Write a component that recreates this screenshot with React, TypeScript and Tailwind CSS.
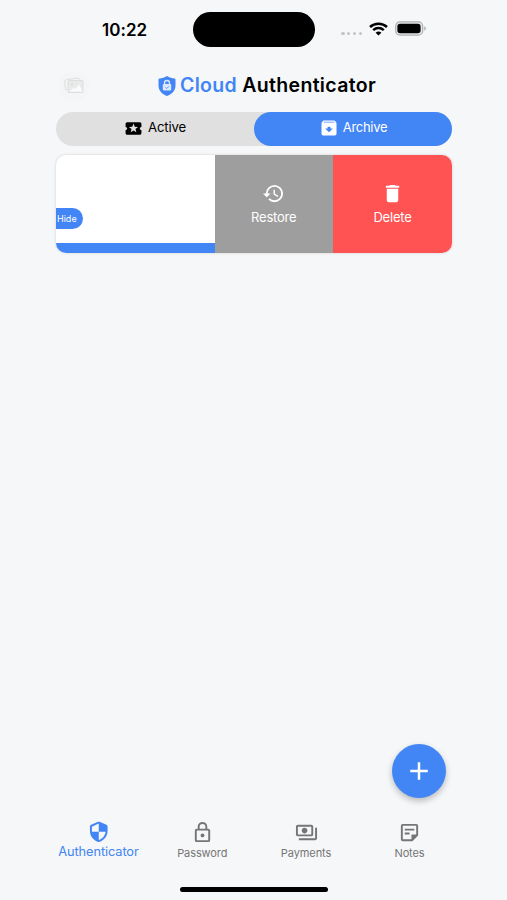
import React from "react";
import {
  MdLocalActivity,
  MdHistory,
  MdDelete,
  MdAdd,
  MdOutlinePayments,
} from "react-icons/md";

function StatusBar() {
  return (
    <div className="flex h-[60px] items-center">
      <div className="ml-[102px] w-[91px] pb-[1px] font-['Inter',sans-serif] text-[17px] font-semibold leading-5 tracking-[0.05px]">
        10:22
      </div>
      <div className="mb-[1px] h-[35px] w-[122px] rounded-full bg-black" />
      <div className="ml-[26px] mt-[7px] flex gap-[2.3px]">
        {[0, 1, 2, 3].map((i) => (
          <span key={i} className="size-[3.6px] rounded-full bg-[#c4c4c6]" />
        ))}
      </div>
      <svg className="mb-[3px] ml-[7px] h-[14px] w-[19px]" viewBox="0 0 19 14" fill="none" stroke="#000" strokeWidth="2.5">
        <path d="M1 5C5.7.6 13.3.6 18 5" />
        <path d="M4.2 8.2c3-2.8 7.600-2.800 10.600 0" />
        <path d="M9.500 13.500 6.600 10.700c1.700-1.500 4.100-1.500 5.800 0z" fill="#000" stroke="none" />
      </svg>
      <svg className="mb-[3px] ml-[7px] h-[15px] w-[32px]" viewBox="0 0 32 15">
        <rect x=".7" y=".8" width="27" height="13.400" rx="4.300" fill="#e9e9ea" stroke="#b0b0b2" strokeWidth="1.200" />
        <rect x="2.400" y="2.700" width="23.200" height="9.600" rx="2.700" fill="#000" />
        <path d="M29.300 5.300c2 .7 2 3.700 0 4.400z" fill="#aaa" />
      </svg>
    </div>
  );
}

function Header() {
  return (
    <header className="flex h-[52px] items-center">
      <div className="ml-1 flex size-[28px] items-center justify-center rounded-full bg-[#f4f5f6] shadow-[0_0_3px_#f2f3f3]">
        <svg className="size-[20px]" viewBox="0 0 20 20" fill="none" stroke="#dcdddd">
          <path d="M3 13.500H1.500L.7 4.500l3-1 10.800-1.500.6 2" />
          <rect x="4" y="4.500" width="15" height="12" rx="1" fill="#e9eaea" />
          <path d="m5.500 15.500 4-3.500 2 1 3.500-4.500 3.500 7z" fill="#fbfbfb" stroke="none" />
          <circle cx="8" cy="8.300" r="1" />
        </svg>
      </div>
      <div className="ml-[70px] flex items-center">
        <svg className="h-5 w-[18px]" viewBox="0 0 18 20">
          <path d="M9 0c2.400 1.400 5 2.300 7.500 2.600.6.100 1 .5 1 1.100v5.800c0 5-3.500 8.600-8.500 10.500C4 18.100.5 14.500.5 9.500V3.700c0-.6.4-1 1-1.100C4 2.300 6.600 1.400 9 0z" fill="#4285f4" />
          <path d="M6.500 9V7a2.500 2.500 0 0 1 5 0v2" fill="none" stroke="#dce8ff" strokeWidth="1.300" />
          <rect x="4.800" y="8" width="8.400" height="6.500" rx="1.300" fill="#dce8ff" />
          <path d="m7.500 11.300 1.200 1.200 2.200-2.200" fill="none" stroke="#4285f4" strokeWidth=".8" />
        </svg>
        <h1 className="ml-[4px] whitespace-nowrap font-['Inter',sans-serif] text-[19.5px] font-semibold tracking-[0.32px]">
          <span className="text-[#4285f4]">Cloud</span> Authenticator
        </h1>
      </div>
    </header>
  );
}

function ArchiveIcon() {
  return (
    <svg className="size-[20px]" viewBox="0 0 24 24" fill="currentColor">
      <path
        fillRule="evenodd"
        d="m20.500 5.200-1.400-1.700c-.3-.3-.7-.5-1.100-.5H6c-.5 0-.9.2-1.200.600L3.500 5.200C3.200 5.600 3 6 3 6.500V19c0 1.100.9 2 2 2h14c1.100 0 2-.9 2-2V6.500c0-.5-.2-.9-.5-1.300zM5.300 5.300l.7-.8h12l.7.8zM12 17l-4.700-4.300h3v-2.300h3.400v2.300h3z"
      />
    </svg>
  );
}

function Tabs() {
  return (
    <div className="flex h-[34px] rounded-full bg-[#e0e0e0] text-[13.2px] tracking-[-0.15px]">
      <button className="flex w-[198px] items-center justify-center gap-[5px] pb-[2px]">
        <MdLocalActivity className="size-[19px]" />
        Active
      </button>
      <button className="flex w-[198px] items-center justify-center gap-[4px] rounded-full bg-[#4285f4] pb-[2px] text-[13px] tracking-[-0.3px] text-white">
        <ArchiveIcon />
        Archive
      </button>
    </div>
  );
}

function ArchivedItem() {
  return (
    <section className="mt-[9px] flex h-[98px] overflow-hidden rounded-[10px] bg-white text-[13px] tracking-[-0.2px] text-white shadow-[0_0_3px_rgba(0,0,0,0.16)]">
      <div className="flex w-[158.500px] flex-col justify-between border-b-[10px] border-[#4285f4] pt-[53px]">
        <span className="h-[21px] w-[26.500px] rounded-r-full bg-[#4285f4] pl-[1px] text-[9px] leading-[22px] tracking-normal">Hide</span>
      </div>
      <button className="flex w-[118.500px] flex-col items-center bg-[#9e9e9e] pt-[27px]">
        <MdHistory className="size-[23px]" />
        <span className="mt-[2px] leading-5">Restore</span>
      </button>
      <button className="flex w-[119px] flex-col items-center bg-[#ff5252] pt-[27px]">
        <MdDelete className="size-[23px]" />
        <span className="mt-[2px] leading-5">Delete</span>
      </button>
    </section>
  );
}

function ShieldIcon() {
  return (
    <svg className="mt-[10px] size-[23.500px]" viewBox="0 0 24 24" fill="currentColor">
      <path d="m11.190 1.860-7 3.110C3.470 5.290 3 6.010 3 6.800V11c0 5.550 3.840 10.240 9 11.500 5.160-1.260 9-5.950 9-11.500V6.800c0-.79-.47-1.510-1.190-1.830l-7-3.110c-.51-.23-1.110-.23-1.620 0zM12 11.990h7c-.53 4.120-3.280 7.290-7 8.440V12H5V6.800l7-3.110v8.300z" />
    </svg>
  );
}

function LockIcon() {
  return (
    <svg className="mt-[11px] size-[23px]" viewBox="0 0 24 24" fill="none" stroke="currentColor" strokeWidth="2">
      <rect x="5" y="9" width="14" height="12" rx="1" />
      <path d="M8 9V6a4 4 0 0 1 8 0v3" />
      <circle cx="12" cy="15" r="2" fill="currentColor" stroke="none" />
    </svg>
  );
}

function NoteIcon() {
  return (
    <svg className="mt-[11px] size-[23px]" viewBox="0 0 24 24" fill="none" stroke="currentColor" strokeWidth="2">
      <path d="M14.600 20H5a1 1 0 0 1-1-1V5a1 1 0 0 1 1-1h14a1 1 0 0 1 1 1v9.600z" />
      <path d="M14 20v-5a1 1 0 0 1 1-1h5z" fill="currentColor" stroke="none" />
      <path d="M7 9h10M7 13h5" />
    </svg>
  );
}

function BottomNav() {
  return (
    <nav className="flex h-[62px] text-[11px] tracking-[-0.1px] text-[#757575]">
      <a className="flex w-[104px] flex-col items-center text-[12.8px] text-[#4285f4]">
        <ShieldIcon />
        <span className="leading-4">Authenticator</span>
      </a>
      <a className="flex w-[103.500px] flex-col items-center">
        <LockIcon />
        <span className="mt-[1px] leading-4">Password</span>
      </a>
      <a className="flex w-[104px] flex-col items-center">
        <MdOutlinePayments className="mt-[11px] size-[23px]" />
        <span className="mt-[1px] leading-4">Payments</span>
      </a>
      <a className="flex w-[103px] flex-col items-center">
        <NoteIcon />
        <span className="mt-[1px] leading-4">Notes</span>
      </a>
    </nav>
  );
}

export default function App() {
  return (
    <div className="flex h-[900px] w-[507px] flex-col overflow-hidden bg-[#f5f7f9] font-['Inter',sans-serif] text-black">
      <StatusBar />
      <main className="ml-[56px] flex w-[396px] flex-1 flex-col">
        <Header />
        <Tabs />
        <ArchivedItem />
        <button className="mb-[12px] mr-[6px] mt-auto flex size-[54px] items-center justify-center self-end rounded-full bg-[#4285f4] text-white shadow-[0_3px_6px_rgba(0,0,0,0.25)]">
          <MdAdd className="size-[30px]" />
        </button>
      </main>
      <div className="ml-[46.500px]">
        <BottomNav />
      </div>
      <div className="mb-[8px] ml-[180px] mt-[15px] h-[5px] w-[148px] rounded-full bg-black" />
    </div>
  );
}
